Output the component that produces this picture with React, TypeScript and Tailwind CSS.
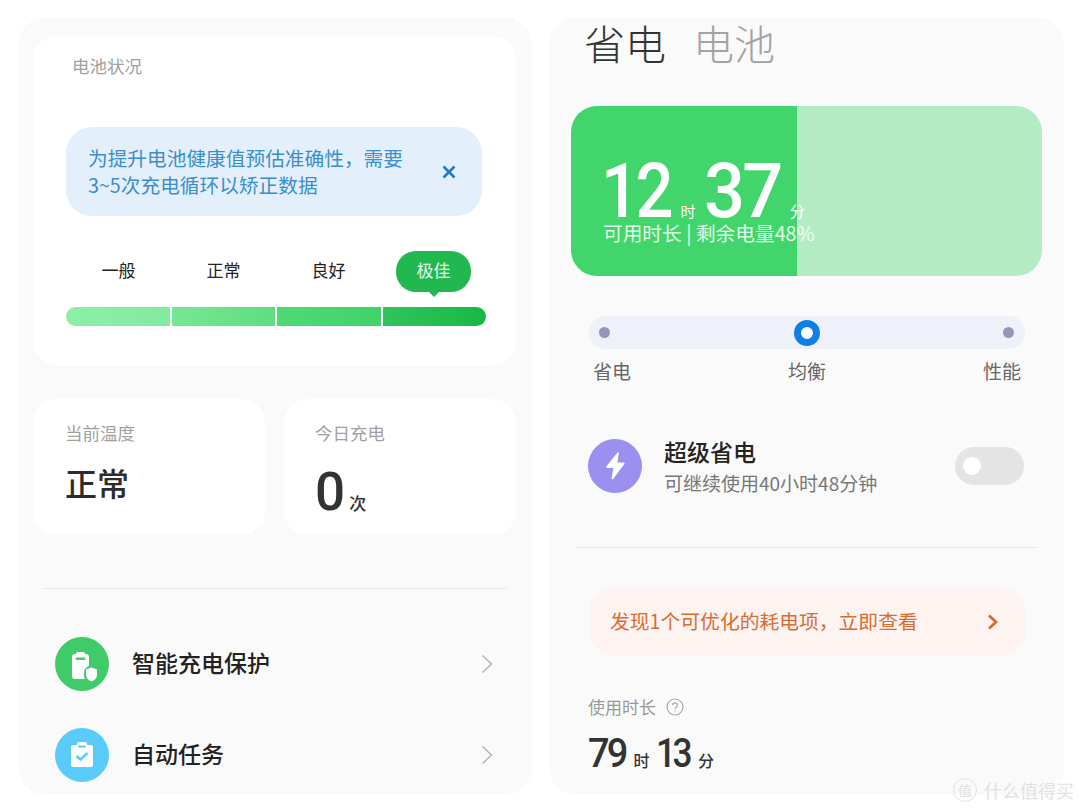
function BatteryShieldIcon() {
  return (
    <svg viewBox="0 0 54 54" className="w-[54px] h-[54px]">
      <circle cx="27" cy="27" r="27" fill="#3fcb67" />
      <path
        d="M21 16.5 a1.5 1.5 0 0 1 1.5 -1.5 h6 a1.5 1.5 0 0 1 1.5 1.5 v.5 h1 a3 3 0 0 1 3 3 v9 a8 8 0 0 0 -5 8 v2 a5 5 0 0 0 1 3 h-10 a3 3 0 0 1 -3 -3 v-19 a3 3 0 0 1 3 -3 h1 z"
        fill="#fff"
      />
      <rect x="20.5" y="20.5" width="10" height="2.4" rx="1.2" fill="#3fcb67" />
      <path d="M36.5 30.5 l5.5 2 v5 c0 3.5 -2.5 5.8 -5.5 7 c-3 -1.2 -5.5 -3.5 -5.5 -7 v-5 z" fill="#fff" />
    </svg>
  );
}

function ClipboardIcon() {
  return (
    <svg viewBox="0 0 54 54" className="w-[54px] h-[54px]">
      <circle cx="27" cy="27" r="27" fill="#5acbfa" />
      <path
        d="M18 17 h4 v-1 a2 2 0 0 1 2 -2 h6 a2 2 0 0 1 2 2 v1 h4 a2 2 0 0 1 2 2 v18 a2 2 0 0 1 -2 2 h-18 a2 2 0 0 1 -2 -2 v-18 a2 2 0 0 1 2 -2 z"
        fill="#fff"
      />
      <rect x="23" y="17.5" width="8" height="2" rx="1" fill="#5acbfa" />
      <path d="M21.5 28 l4 3.6 l7 -6.6" fill="none" stroke="#5acbfa" strokeWidth="2.6" />
    </svg>
  );
}

function BoltIcon() {
  return (
    <svg viewBox="0 0 54 54" className="w-[54px] h-[54px]">
      <circle cx="27" cy="27" r="27" fill="#9b8ff0" />
      <path
        d="M29.5 13.5 a.8 .8 0 0 1 1.4 .6 l-1.6 9.4 h6.4 a.9 .9 0 0 1 .7 1.4 l-11.3 15.2 a.8 .8 0 0 1 -1.4 -.6 l1.6 -10.5 h-6.4 a.9 .9 0 0 1 -.7 -1.4 z"
        fill="#fff"
      />
    </svg>
  );
}

function Chevron() {
  return (
    <svg viewBox="0 0 12 20" className="w-[12px] h-[20px]" fill="none" stroke="#b4b4b4" strokeWidth="1.5">
      <path d="M1.5 1.5 L10.5 10 L1.5 18.5" />
    </svg>
  );
}

function Row({ icon, label }: { icon: React.ReactNode; label: string }) {
  return (
    <div className="flex h-[91px] items-center pl-[37px] pr-[39px]">
      {icon}
      <span className="ml-[23px] flex-1 pb-[3px] text-[23px] font-medium text-[#222]">{label}</span>
      <Chevron />
    </div>
  );
}

const levels = [
  { label: '一般', bar: 'rounded-l-full from-[#8cf0a7] to-[#82eb9e]' },
  { label: '正常', bar: 'from-[#76e794] to-[#5fdd80]' },
  { label: '良好', bar: 'from-[#4fd975] to-[#40d36a]' },
  { label: '极佳', bar: 'rounded-r-full from-[#2fc45c] to-[#17b845]' },
];

export default function App() {
  return (
    <div
      className="relative flex h-[810px] w-[1080px] gap-[17px] overflow-hidden bg-white pl-[18px] pt-[17px]"
      style={{ fontFamily: '"Noto Sans CJK SC", sans-serif' }}
    >
      {/* left phone */}
      <div className="h-[778px] w-[514px] rounded-[28px] bg-[#fafafa] pt-[19px]">
        <div className="ml-[15px] h-[329px] w-[483px] rounded-[24px] bg-white pl-[33px] pt-[18px]">
          <div className="ml-[6px] text-[17.5px] leading-[24px] text-[#a0a0a0]">电池状况</div>
          <div className="mt-[49px] flex h-[89px] w-[416px] items-center rounded-[26px] bg-[#e3f0fc] pl-[22px] pr-[26px]">
            <p className="flex-1 pb-[2px] text-[19.7px] leading-[27px] text-[#3a8ecb]">
              为提升电池健康值预估准确性，需要
              <br />
              3~5次充电循环以矫正数据
            </p>
            <svg viewBox="0 0 14 14" className="h-[14px] w-[14px]" fill="none" stroke="#1f78c8" strokeWidth="2.6">
              <path d="M1.5 1.5 L12.5 12.5 M12.5 1.5 L1.5 12.5" />
            </svg>
          </div>
          <div className="mt-[35px] grid w-[420px] grid-cols-4 justify-items-center">
            {levels.map((l, i) =>
              i === 3 ? (
                <div
                  key={l.label}
                  className="relative flex h-[41px] w-[75px] items-center justify-center rounded-[20px] bg-[#22b850] pb-[3px] text-[17px] text-[#e6f8eb]"
                >
                  {l.label}
                  <div className="absolute bottom-[-5px] left-1/2 h-0 w-0 -translate-x-1/2 border-x-[6px] border-t-[6px] border-x-transparent border-t-[#22b850]" />
                </div>
              ) : (
                <div key={l.label} className="flex h-[41px] items-center pb-[3px] text-[17px] text-[#222]">
                  {l.label}
                </div>
              )
            )}
          </div>
          <div className="mt-[15px] flex h-[19px] w-[420px] gap-[2px]">
            {levels.map((l) => (
              <div key={l.label} className={`flex-1 bg-gradient-to-r ${l.bar}`} />
            ))}
          </div>
        </div>

        <div className="ml-[15px] mt-[34px] flex w-[483px] gap-[19px]">
          <div className="h-[136px] w-[232px] rounded-[24px] bg-white pl-[32px] pt-[22px]">
            <div className="text-[17.5px] leading-[24px] text-[#a0a0a0]">当前温度</div>
            <div className="mt-[12px] text-[32px] font-medium leading-[50px] text-[#2c2c2c]">正常</div>
          </div>
          <div className="h-[136px] w-[232px] rounded-[24px] bg-white pl-[31px] pt-[22px]">
            <div className="text-[17.5px] leading-[24px] text-[#a0a0a0]">今日充电</div>
            <div className="mt-[15px] flex items-baseline leading-[64px]">
              <span className="text-[53px] font-medium text-[#333]" style={{ fontFamily: 'Roboto, sans-serif' }}>
                0
              </span>
              <span className="ml-[4px] text-[17px] font-medium text-[#333]">次</span>
            </div>
          </div>
        </div>

        <div className="mx-[25px] mt-[53px] h-px bg-[#e6e6e6]" />
        <div className="mt-[29px]">
          <Row icon={<BatteryShieldIcon />} label="智能充电保护" />
          <Row icon={<ClipboardIcon />} label="自动任务" />
        </div>
      </div>

      {/* right phone */}
      <div className="h-[778px] w-[515px] rounded-[28px] bg-[#fafafa]">
        <div className="-mt-[3px] flex gap-[27px] pl-[35px] text-[41px] font-light leading-[56px]">
          <span className="text-[#333]">省电</span>
          <span className="text-[#a3a3a3]">电池</span>
        </div>
        <div className="ml-[22px] mt-[36px] h-[170px] w-[471px] rounded-[26px] bg-[linear-gradient(to_right,#41d56c_48%,#b3ecc3_48%)] pl-[30px] pt-[57px] text-white">
          <div className="flex h-[56px] items-baseline leading-[56px]" style={{ fontFamily: 'Roboto, sans-serif' }}>
            <span className="origin-left scale-x-[.88] text-[76px] font-medium tracking-[-4px]">12</span>
            <span className="ml-[1px] text-[15px]" style={{ fontFamily: '"Noto Sans CJK SC", sans-serif' }}>
              时
            </span>
            <span className="ml-[9px] origin-left scale-x-[.95] text-[76px] font-medium tracking-[-3px]">37</span>
            <span className="ml-[5px] text-[15px]" style={{ fontFamily: '"Noto Sans CJK SC", sans-serif' }}>
              分
            </span>
          </div>
          <div className="ml-[2px] mt-[1px] whitespace-nowrap text-[19.7px] leading-[26px] text-white/85">
            可用时长 | 剩余电量48%
          </div>
        </div>

        <div className="ml-[40px] mt-[40px] flex h-[33px] w-[436px] items-center justify-between rounded-full bg-[#eef1f9] pl-[10px] pr-[11px]">
          <div className="h-[11px] w-[11px] rounded-full bg-[#9296b8]" />
          <div className="h-[26px] w-[26px] rounded-full border-[7px] border-[#0f7fe8] bg-white" />
          <div className="h-[11px] w-[11px] rounded-full bg-[#9296b8]" />
        </div>
        <div className="ml-[44px] mt-[8px] flex w-[428px] justify-between text-[19px] leading-[27px] text-[#666]">
          <span>省电</span>
          <span>均衡</span>
          <span>性能</span>
        </div>

        <div className="ml-[39px] mt-[51px] flex w-[436px] items-center">
          <BoltIcon />
          <div className="ml-[22px] flex-1">
            <div className="text-[23px] font-medium leading-[32px] text-[#222]">超级省电</div>
            <div className="mt-[3px] text-[19px] leading-[26px] text-[#777]">可继续使用40小时48分钟</div>
          </div>
          <div className="flex h-[38px] w-[69px] items-center rounded-full bg-[#e4e4e4] pl-[8px]">
            <div className="h-[18px] w-[18px] rounded-full bg-white" />
          </div>
        </div>

        <div className="mx-[27px] mt-[51px] h-px w-[461px] bg-[#e6e6e6]" />

        <div className="ml-[40px] mt-[39px] flex h-[69px] w-[437px] items-center rounded-[26px] bg-[#fdf3f0] pl-[21px] pr-[27px]">
          <span className="flex-1 pb-[2px] text-[19.8px] text-[#d96c32]">发现1个可优化的耗电项，立即查看</span>
          <svg viewBox="0 0 12 16" className="h-[16px] w-[12px]" fill="none" stroke="#e0682c" strokeWidth="2.8">
            <path d="M2 1.5 L9 8 L2 14.5" />
          </svg>
        </div>

        <div className="ml-[39px] mt-[39px] flex items-center gap-[10px] text-[17px] leading-[24px] text-[#999]">
          使用时长
          <svg viewBox="0 0 18 18" className="h-[18px] w-[18px]" fill="none" stroke="#a8a8a8" strokeWidth="1.2">
            <circle cx="9" cy="9" r="8" />
            <path d="M6.6 7.2 a2.4 2.4 0 1 1 3.6 2.1 c-.8 .5 -1.2 .9 -1.2 1.8" />
            <path d="M9 12.6 v1" />
          </svg>
        </div>
        <div className="ml-[39px] mt-[9px] flex items-baseline leading-[52px] text-[#333]">
          <span className="origin-left scale-x-[.95] text-[40px] font-medium tracking-[-3px]" style={{ fontFamily: 'Roboto, sans-serif' }}>
            79
          </span>
          <span className="ml-[6px] text-[16px] font-medium">时</span>
          <span className="ml-[7px] origin-left scale-x-[.88] text-[40px] font-medium tracking-[-4px]" style={{ fontFamily: 'Roboto, sans-serif' }}>
            13
          </span>
          <span className="ml-[4px] text-[16px] font-medium">分</span>
        </div>
      </div>

      {/* watermark */}
      <div className="absolute bottom-[8px] right-[6px] flex items-center gap-[7px] text-[#e2e2e2]">
        <span className="flex h-[24px] w-[24px] items-center justify-center rounded-full border-[1.5px] border-[#e2e2e2] text-[14px]">
          值
        </span>
        <span className="text-[18px] leading-[24px]">什么值得买</span>
      </div>
    </div>
  );
}
